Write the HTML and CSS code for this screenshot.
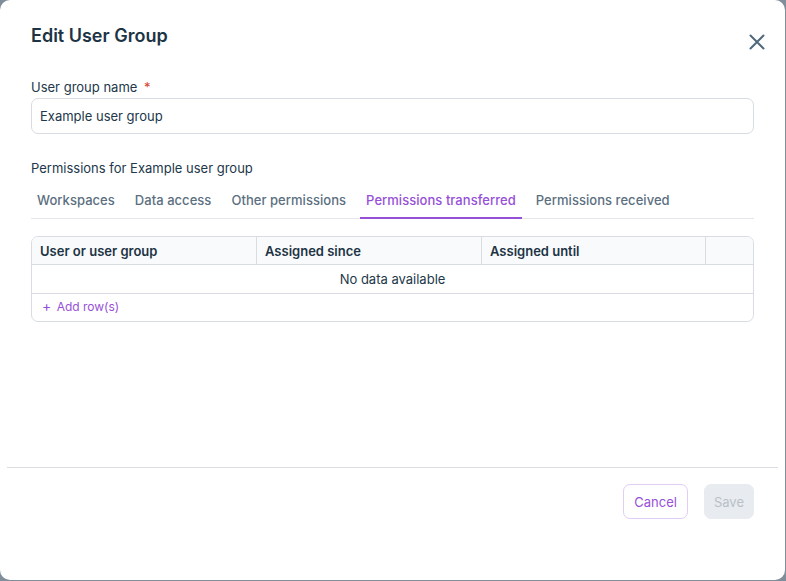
FILE: index.html
```html
<!DOCTYPE html>
<html lang="en">
<head>
    <meta charset="UTF-8">
    <meta name="viewport" content="width=device-width, initial-scale=1.0">
    <title>Edit User Group</title>
    <link rel="stylesheet" href="styles.css">
</head>
<body>
    <div class="modal">
        <div class="modal-header">
            <h2>Edit User Group</h2>
            <button class="close-btn" type="button" aria-label="Close">
                <svg width="24" height="24" viewBox="0 0 24 24" fill="none" stroke="currentColor" stroke-width="2" stroke-linecap="round">
                    <path d="M5.5 5.5l13 13M18.5 5.5l-13 13"/>
                </svg>
            </button>
        </div>

        <div class="modal-body">
            <div class="form-group">
                <label for="groupName">User group name <span class="required">*</span></label>
                <input type="text" id="groupName" value="Example user group">
            </div>

            <div class="section-title">Permissions for Example user group</div>
            <div class="tabs">
                <div class="tab">Workspaces</div>
                <div class="tab">Data access</div>
                <div class="tab">Other permissions</div>
                <div class="tab active">Permissions transferred</div>
                <div class="tab">Permissions received</div>
            </div>

            <div class="grid">
                <div class="grid-row grid-head">
                    <div class="cell">User or user group</div>
                    <div class="cell">Assigned since</div>
                    <div class="cell">Assigned until</div>
                    <div class="cell cell-actions"></div>
                </div>
                <div class="grid-empty">No data available</div>
                <div class="grid-add">
                    <span class="plus">+</span> Add row(s)
                </div>
            </div>
        </div>

        <div class="modal-footer">
            <button class="btn btn-outline" type="button">Cancel</button>
            <button class="btn btn-disabled" type="button" disabled>Save</button>
        </div>
    </div>
</body>
</html>
```

FILE: styles.css
```css
body {
    margin: 0;
    padding: 0;
    background-color: #808d9a;
    font-family: Inter, "Noto Sans", sans-serif;
    color: #22384a;
}
.modal {
    width: 785px;
    height: 580px;
    background-color: #fff;
    border-radius: 10px;
    display: flex;
    flex-direction: column;
    box-sizing: border-box;
}
.modal-header {
    display: flex;
    justify-content: space-between;
    align-items: flex-start;
    padding: 25px 16px 0 31px;
}
h2 {
    margin: 0;
    font-size: 18px;
    line-height: 22px;
    font-weight: 600;
    color: #1d3445;
}
.close-btn {
    margin-top: 5px;
    padding: 0;
    width: 24px;
    height: 24px;
    border: none;
    background: none;
    color: #4f687a;
    cursor: pointer;
}
.modal-body {
    flex: 1;
    padding: 0 31px;
}
.form-group {
    margin-top: 25px;
}
label {
    display: block;
    font-size: 13px;
    line-height: 16px;
    margin-bottom: 3px;
    color: #22384a;
}
.required {
    color: #d4402c;
    margin-left: 3px;
}
input {
    width: 100%;
    height: 36px;
    box-sizing: border-box;
    padding: 0 8px;
    border: 1px solid #d7dce2;
    border-radius: 7px;
    font-family: inherit;
    font-size: 13px;
    color: #22384a;
}
.section-title {
    margin-top: 26px;
    font-size: 13px;
    line-height: 16px;
}
.tabs {
    display: flex;
    gap: 8px;
    margin-top: 8px;
    border-bottom: 1px solid #e5e7eb;
}
.tab {
    padding: 8px 6px 9px;
    margin-bottom: -1px;
    font-size: 13px;
    line-height: 16px;
    font-weight: 500;
    letter-spacing: 0.04px;
    color: #5b6f80;
    border-bottom: 2px solid transparent;
}
.tab.active {
    color: #9650d8;
    border-bottom-color: #9650d8;
}
.grid {
    margin-top: 17px;
    border: 1px solid #d9dde3;
    border-radius: 7px;
    overflow: hidden;
    font-size: 13px;
}
.grid-row {
    display: grid;
    grid-template-columns: 225px 225px 224px 1fr;
}
.grid-head {
    height: 27px;
    background-color: #f9fafb;
    border-bottom: 1px solid #d9dde3;
    font-weight: 600;
    color: #1d3445;
}
.cell {
    padding: 1px 8px 0;
    line-height: 27px;
    border-right: 1px solid #d9dde3;
}
.cell-actions {
    border-right: none;
}
.grid-empty {
    height: 28px;
    line-height: 28px;
    text-align: center;
    border-bottom: 1px solid #d9dde3;
}
.grid-add {
    height: 27px;
    line-height: 24px;
    padding-left: 10px;
    font-size: 12px;
    color: #9650d8;
}
.plus {
    font-size: 14px;
    margin-right: 2px;
}
.modal-footer {
    margin: 0 7px;
    padding: 16px 24px 61px;
    border-top: 1px solid #dcdce2;
    display: flex;
    justify-content: flex-end;
    gap: 16px;
}
.btn {
    height: 35px;
    padding: 0 10px;
    border-radius: 7px;
    font-family: inherit;
    font-size: 13px;
    cursor: pointer;
}
.btn-outline {
    background-color: #fff;
    border: 1px solid #e2cdf6;
    color: #9650d8;
}
.btn-disabled {
    padding: 0 9px;
    background-color: #e8ebef;
    border: 1px solid #e8ebef;
    color: #b9c0c9;
    cursor: not-allowed;
}
```
